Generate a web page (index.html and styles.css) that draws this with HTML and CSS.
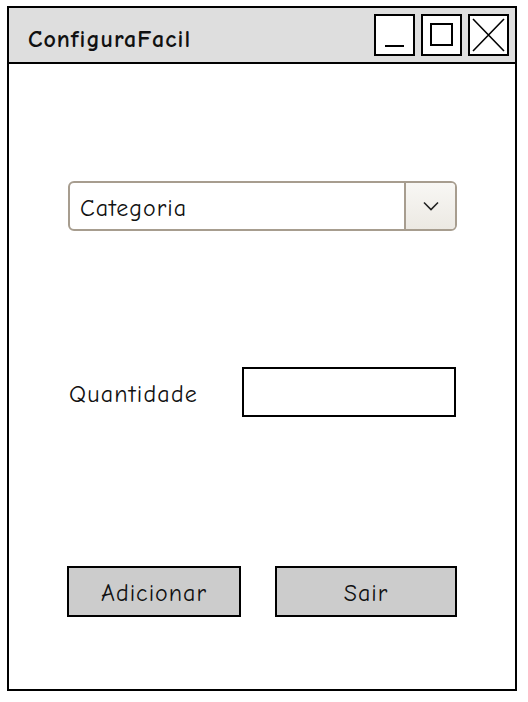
FILE: index.html
```html
<!DOCTYPE html>
<html lang="pt">
<head>
<meta charset="utf-8">
<title>ConfiguraFacil</title>
<link rel="stylesheet" href="styles.css">
</head>
<body>
<div class="window">
  <div class="titlebar">
    <span class="title">ConfiguraFacil</span>
    <div class="controls">
      <span class="ctl"><svg width="37" height="38" viewBox="0 0 37 38"><line x1="9" y1="30" x2="28" y2="30" stroke="#000" stroke-width="2"/></svg></span>
      <span class="ctl"><svg width="37" height="38" viewBox="0 0 37 38"><rect x="8" y="8" width="21" height="21" fill="none" stroke="#000" stroke-width="2"/></svg></span>
      <span class="ctl"><svg width="37" height="38" viewBox="0 0 37 38"><path d="M3 3 L34 35 M34 3 L3 35" stroke="#000" stroke-width="1.6" fill="none"/></svg></span>
    </div>
  </div>
  <div class="content">
    <div class="select">
      <span class="select-text">Categoria</span>
      <span class="select-btn"><svg width="16" height="10" viewBox="0 0 16 10"><path d="M1 1.5 L8 8.5 L15 1.5" stroke="#222" stroke-width="1.6" fill="none"/></svg></span>
    </div>
    <div class="field-row">
      <span class="label">Quantidade</span>
      <span class="input"></span>
    </div>
    <div class="actions">
      <span class="btn btn-add">Adicionar</span>
      <span class="btn btn-exit">Sair</span>
    </div>
  </div>
</div>
</body>
</html>
```
FILE: styles.css
```css
* { box-sizing: border-box; }
html, body { margin: 0; padding: 0; background: #fff; }
body {
  font-family: "Comic Sans MS", "Comic Neue", "DejaVu Sans", sans-serif;
  color: #111;
}
.window {
  margin: 6px 0 0 7px;
  width: 510px;
  height: 685px;
  border: 2px solid #000;
  display: flex;
  flex-direction: column;
}
.titlebar {
  height: 56px;
  background: #dedede;
  border-bottom: 2px solid #000;
  display: flex;
  align-items: flex-start;
  justify-content: space-between;
  padding: 6px 6px 0 19px;
}
.title {
  font-weight: bold;
  font-size: 24px;
  line-height: 28px;
  margin-top: 11px;
  letter-spacing: 1px;
}
.controls {
  display: flex;
  gap: 6px;
}
.ctl {
  width: 41px;
  height: 42px;
  border: 2px solid #000;
  background: #fff;
  display: block;
}
.ctl svg { display: block; }
.content {
  flex: 1;
  padding: 117px 0 0 59px;
  display: flex;
  flex-direction: column;
}
.select {
  width: 389px;
  height: 50px;
  border: 2px solid #a79d8f;
  border-radius: 6px;
  display: flex;
  background: #fff;
  overflow: hidden;
}
.select-text {
  flex: 1;
  font-size: 24px;
  letter-spacing: 1px;
  line-height: 50px;
  padding-left: 10px;
}
.select-btn {
  width: 51px;
  border-left: 2px solid #a79d8f;
  background: linear-gradient(#f8f7f4, #ece9e3);
  display: flex;
  align-items: center;
  justify-content: center;
}
.field-row {
  margin-top: 136px;
  display: flex;
  align-items: center;
  height: 50px;
}
.label {
  font-size: 24px;
  letter-spacing: 1.2px;
  width: 174px;
  padding-left: 1px;
  padding-top: 3px;
}
.input {
  width: 214px;
  height: 50px;
  border: 2px solid #000;
  background: #fff;
}
.actions {
  margin-top: 149px;
  display: flex;
  gap: 34px;
}
.btn {
  height: 51px;
  border: 2px solid #000;
  background: #cccccc;
  font-size: 24px;
  letter-spacing: 1px;
  padding-top: 3px;
  display: flex;
  align-items: center;
  justify-content: center;
}
.btn-add { width: 174px; margin-left: -1px; }
.btn-exit { width: 182px; }
```
